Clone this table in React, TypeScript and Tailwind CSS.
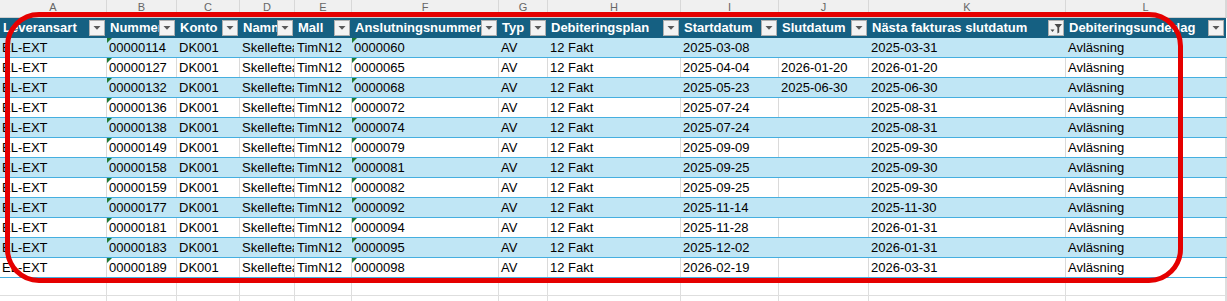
import React from 'react';

const GRID =
  'grid grid-cols-[107px_70px_63px_55px_57px_147px_49px_133px_98px_90px_197px_160px_1fr]';

const letters = ['A', 'B', 'C', 'D', 'E', 'F', 'G', 'H', 'I', 'J', 'K', 'L', ''];

const headers = [
  'Leveransart',
  'Nummer',
  'Konto',
  'Namn',
  'Mall',
  'Anslutningsnummer',
  'Typ',
  'Debiteringsplan',
  'Startdatum',
  'Slutdatum',
  'Nästa fakturas slutdatum',
  'Debiteringsunderlag',
];

const rows: [string, string, string, string, string][] = [
  ['00000114', '0000060', '2025-03-08', '', '2025-03-31'],
  ['00000127', '0000065', '2025-04-04', '2026-01-20', '2026-01-20'],
  ['00000132', '0000068', '2025-05-23', '2025-06-30', '2025-06-30'],
  ['00000136', '0000072', '2025-07-24', '', '2025-08-31'],
  ['00000138', '0000074', '2025-07-24', '', '2025-08-31'],
  ['00000149', '0000079', '2025-09-09', '', '2025-09-30'],
  ['00000158', '0000081', '2025-09-25', '', '2025-09-30'],
  ['00000159', '0000082', '2025-09-25', '', '2025-09-30'],
  ['00000177', '0000092', '2025-11-14', '', '2025-11-30'],
  ['00000181', '0000094', '2025-11-28', '', '2026-01-31'],
  ['00000183', '0000095', '2025-12-02', '', '2026-01-31'],
  ['00000189', '0000098', '2026-02-19', '', '2026-03-31'],
];

function FilterButton({ filtered }: { filtered?: boolean }) {
  return (
    <div className="absolute right-[2px] top-[2px] w-[16px] h-[16px] bg-[#f3f3f3] border border-[#b0b0b0] flex items-center justify-center">
      {filtered ? (
        <svg width="14" height="14" viewBox="0 0 14 14">
          <polygon points="1.5,8.5 5.5,8.5 3.5,11" fill="#4a4a4a" />
          <path d="M5.5 3 H13 L10.2 6.6 V11.5 L8.4 12.5 V6.6 Z" fill="#4a4a4a" />
        </svg>
      ) : (
        <svg width="10" height="6" viewBox="0 0 10 6">
          <polygon points="1.5,1 8.5,1 5,4.8" fill="#595959" />
        </svg>
      )}
    </div>
  );
}

function GreenTri() {
  return (
    <div className="absolute left-0 top-0 w-0 h-0 border-t-[5px] border-t-[#1e7b34] border-r-[5px] border-r-transparent" />
  );
}

export default function App() {
  return (
    <div className="relative w-[1227px] h-[301px] overflow-hidden bg-white font-['Liberation_Sans',Arial,sans-serif] text-[13px] text-black">
      {/* column letters */}
      <div className={`${GRID} h-[18px] bg-[#f0f0f0] border-b border-[#cfcfcf]`}>
        {letters.map((l, i) => (
          <div
            key={i}
            className="border-r border-[#d8d8d8] text-center text-[11px] leading-[14px] text-[#666666]"
          >
            {l}
          </div>
        ))}
      </div>

      {/* table header */}
      <div className={`${GRID} h-[20px] bg-[#156082]`}>
        {headers.map((h, i) => (
          <div
            key={i}
            className="relative overflow-hidden whitespace-nowrap pl-[3px] leading-[20px] font-bold text-white"
          >
            {h}
            <FilterButton filtered={i === 10} />
          </div>
        ))}
        <div className="bg-white" />
      </div>

      {/* data rows */}
      {rows.map((r, idx) => {
        const blue = idx % 2 === 0;
        const cellBorder = blue ? 'border-r border-r-transparent' : 'border-r border-r-[#dadada]';
        const cells = [
          'EL-EXT',
          r[0],
          'DK001',
          'Skelleftea:',
          'TimN12',
          r[1],
          'AV',
          '12 Fakt',
          r[2],
          r[3],
          r[4],
          'Avläsning',
        ];
        return (
          <div
            key={idx}
            className={`${GRID} h-[20px] border-b border-[#45afe0] ${blue ? 'bg-[#c0e6f5]' : 'bg-white'}`}
          >
            {cells.map((c, i) => (
              <div
                key={i}
                className={`relative overflow-hidden whitespace-nowrap pl-[2px] leading-[20px] ${cellBorder}`}
              >
                {(i === 1 || i === 5) && <GreenTri />}
                {c}
              </div>
            ))}
            <div className="bg-white border-r border-[#dadada]" />
          </div>
        );
      })}

      {/* empty rows */}
      {[0, 1].map((k) => (
        <div key={k} className={`${GRID} h-[18px] border-b border-[#dedede]`}>
          {letters.map((_, i) => (
            <div key={i} className="border-r border-[#dedede]" />
          ))}
        </div>
      ))}

      {/* red highlight */}
      <div className="absolute left-[5px] top-[12px] w-[1178px] h-[271px] rounded-[34px] border-[5px] border-[#e50000] pointer-events-none" />
    </div>
  );
}
